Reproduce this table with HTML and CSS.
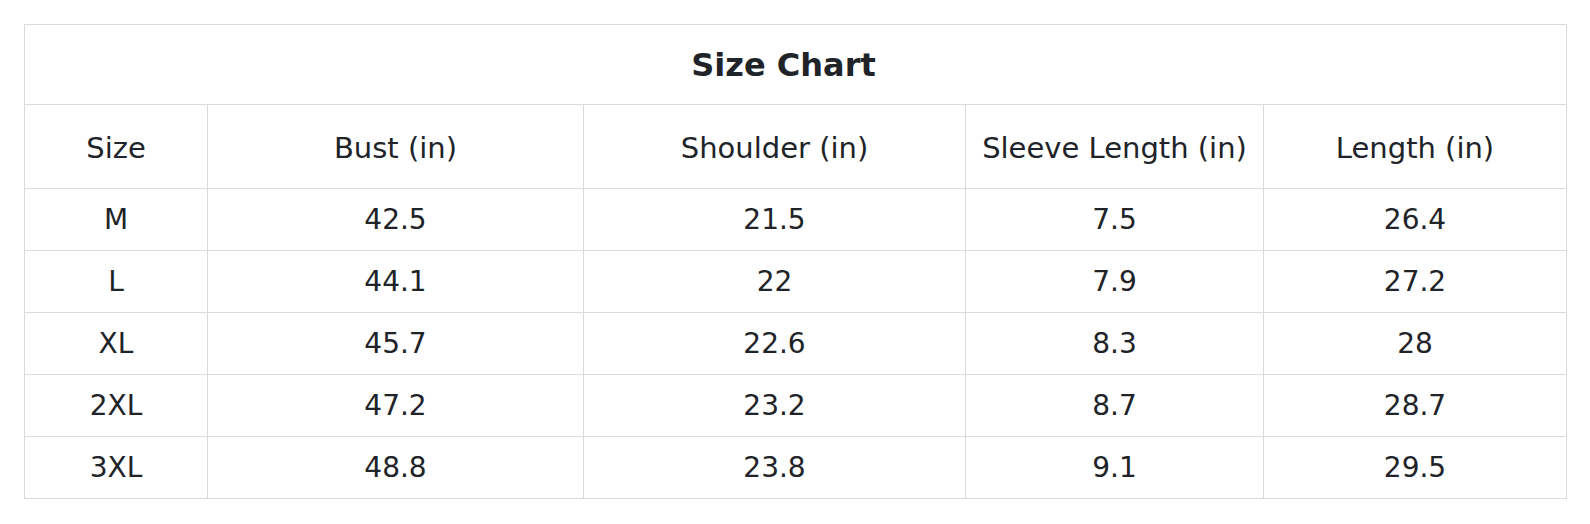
FILE: index.html
```html
<!DOCTYPE html>
<html>
<head>
<meta charset="utf-8">
<link rel="stylesheet" href="styles.css">
</head>
<body>
<div class="wrap">
<table class="chart">
<colgroup>
<col class="c1"><col class="c2"><col class="c3"><col class="c4"><col class="c5">
</colgroup>
<thead>
<tr class="title-row"><th colspan="5">Size Chart</th></tr>
<tr class="head-row"><th>Size</th><th>Bust (in)</th><th>Shoulder (in)</th><th>Sleeve Length (in)</th><th>Length (in)</th></tr>
</thead>
<tbody>
<tr><td>M</td><td>42.5</td><td>21.5</td><td>7.5</td><td>26.4</td></tr>
<tr><td>L</td><td>44.1</td><td>22</td><td>7.9</td><td>27.2</td></tr>
<tr><td>XL</td><td>45.7</td><td>22.6</td><td>8.3</td><td>28</td></tr>
<tr><td>2XL</td><td>47.2</td><td>23.2</td><td>8.7</td><td>28.7</td></tr>
<tr><td>3XL</td><td>48.8</td><td>23.8</td><td>9.1</td><td>29.5</td></tr>
</tbody>
</table>
</div>
</body>
</html>
```

FILE: styles.css
```css
html, body {
  margin: 0;
  padding: 0;
  background: #ffffff;
}
.wrap {
  padding: 24px 0 0 24px;
}
.chart {
  border-collapse: collapse;
  table-layout: fixed;
  width: 1542px;
  font-family: "DejaVu Sans", Verdana, sans-serif;
  color: #202328;
}
.c1 { width: 183px; }
.c2 { width: 376px; }
.c3 { width: 382px; }
.c4 { width: 298px; }
.c5 { width: 303px; }
.chart th, .chart td {
  border: 1px solid #dadada;
  text-align: center;
  vertical-align: middle;
  padding: 0;
  font-size: 28px;
  font-weight: normal;
}
.title-row th {
  height: 80px;
  font-size: 32px;
  font-weight: bold;
  padding-right: 24px;
  box-sizing: border-box;
}
.head-row th {
  height: 84px;
  font-size: 29px;
  padding-top: 2px;
  box-sizing: border-box;
}
.chart td {
  height: 61px;
}
```
